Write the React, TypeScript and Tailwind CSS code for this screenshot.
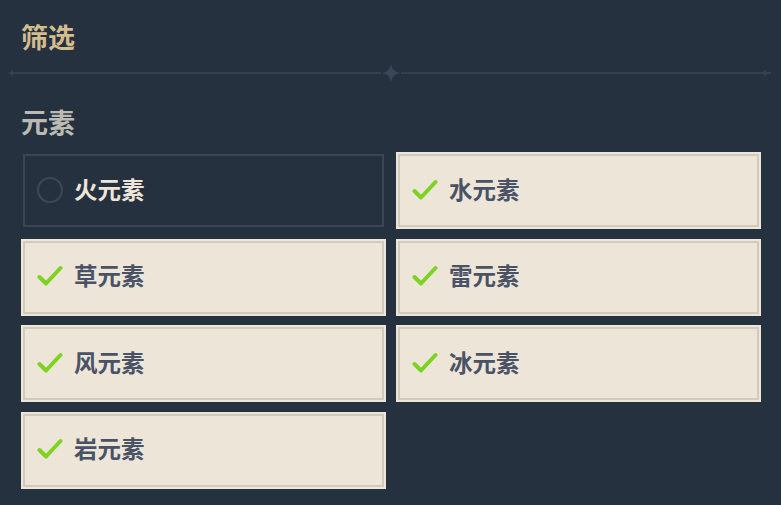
const elements = [
  { name: '火元素', on: false },
  { name: '水元素', on: true },
  { name: '草元素', on: true },
  { name: '雷元素', on: true },
  { name: '风元素', on: true },
  { name: '冰元素', on: true },
  { name: '岩元素', on: true },
]

function Divider() {
  return (
    <div className="relative h-[16px] mx-[10px] flex items-center">
      <div className="h-[2px] w-full bg-[#343f4f]" />
      {/* end diamonds */}
      <svg className="absolute left-[-2px] top-[4px]" width="8" height="8" viewBox="0 0 8 8">
        <path d="M4 0 Q4.6 3.4 8 4 Q4.6 4.6 4 8 Q3.4 4.6 0 4 Q3.4 3.4 4 0Z" fill="#364253" />
      </svg>
      <svg className="absolute right-[2px] top-[4px]" width="8" height="8" viewBox="0 0 8 8">
        <path d="M4 0 Q4.6 3.4 8 4 Q4.6 4.6 4 8 Q3.4 4.6 0 4 Q3.4 3.4 4 0Z" fill="#364253" />
      </svg>
      {/* center star */}
      <div className="absolute left-[371px] top-[-1px] w-[20px] h-[18px] bg-[#263140] flex items-center justify-center">
        <svg width="18" height="18" viewBox="0 0 16 16">
          <path d="M8 0 Q9 7 16 8 Q9 9 8 16 Q7 9 0 8 Q7 7 8 0Z" fill="#3a4758" />
        </svg>
      </div>
    </div>
  )
}

function Card({ name, on }: { name: string; on: boolean }) {
  if (!on) {
    return (
      <div className="h-[77px] p-[2px]">
        <div className="h-full border-2 border-[#3b4655] flex items-center pl-[12px] gap-[11px] pb-[2px]">
          <div className="w-[26px] h-[26px] rounded-full border-2 border-[#3c4858]" />
          <span className="text-[23.5px] font-bold text-[#ece5d8]">{name}</span>
        </div>
      </div>
    )
  }
  return (
    <div className="h-[77px] border-2 border-[#ede6da] bg-[#ece5d8]">
      <div className="h-full border-2 border-[#d2cabb] flex items-center pl-[12px] gap-[11px] pb-[2px]">
        <svg width="26" height="22" viewBox="0 0 26 22">
          <path d="M2.5 12 L9 18.5 L23.5 3" fill="none" stroke="#7ed321" strokeWidth="4" strokeLinecap="round" strokeLinejoin="round" />
        </svg>
        <span className="text-[23.5px] font-bold text-[#4a5366]">{name}</span>
      </div>
    </div>
  )
}

export default function App() {
  return (
    <div
      className="w-[781px] h-[505px] bg-[#263140] overflow-hidden"
      style={{ fontFamily: '"Noto Sans CJK SC", "Noto Sans", sans-serif' }}
    >
      <div className="pt-[18px] pl-[21px] h-[65px]">
        <h1 className="text-[27px] leading-[38px] font-bold text-[#d3bc8e]">筛选</h1>
      </div>
      <Divider />
      <div className="pl-[21px] pt-[22px] h-[71px]">
        <h2 className="text-[27px] leading-[38px] font-bold text-[#bbbab3]">元素</h2>
      </div>
      <div className="grid grid-cols-2 gap-x-[10px] gap-y-[9.5px] pl-[21px] w-[761px]">
        {elements.map((e) => (
          <Card key={e.name} name={e.name} on={e.on} />
        ))}
      </div>
    </div>
  )
}
